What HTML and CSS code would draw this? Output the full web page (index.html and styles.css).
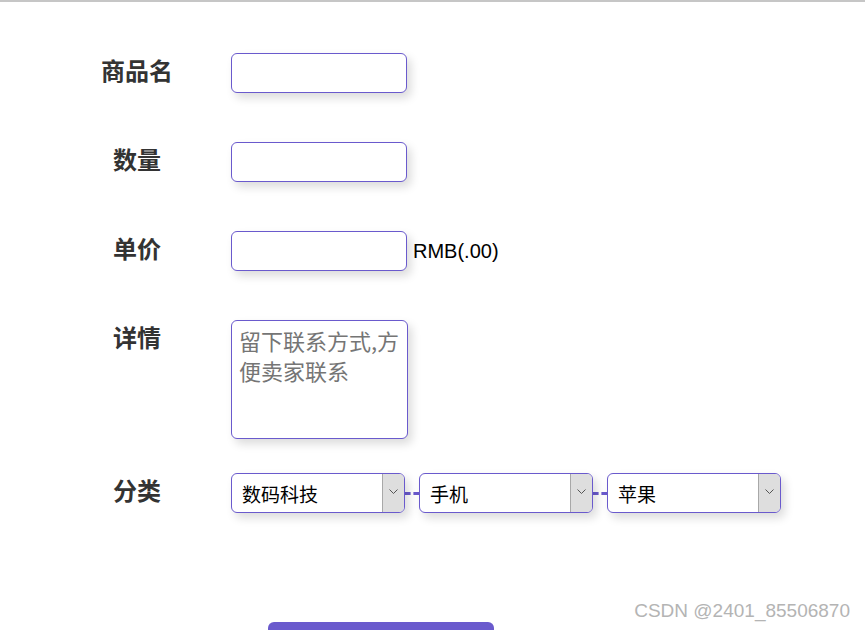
FILE: index.html
```html
<!DOCTYPE html>
<html lang="zh-CN">
<head>
    <meta charset="UTF-8">
    <meta name="viewport" content="width=device-width, initial-scale=1.0">
    <title>发布商品</title>
    <link rel="stylesheet" href="styles.css">
</head>
<body>
    <div class="top-bar"></div>

    <form class="goods-form">
        <div class="form-row">
            <label class="form-label">商品名</label>
            <div class="form-field">
                <input class="text-input" type="text">
            </div>
        </div>

        <div class="form-row">
            <label class="form-label">数量</label>
            <div class="form-field">
                <input class="text-input" type="text">
            </div>
        </div>

        <div class="form-row">
            <label class="form-label">单价</label>
            <div class="form-field">
                <input class="text-input" type="text">
                <span class="unit">RMB(.00)</span>
            </div>
        </div>

        <div class="form-row row-detail">
            <label class="form-label">详情</label>
            <div class="form-field">
                <textarea class="text-area" placeholder="留下联系方式,方便卖家联系"></textarea>
            </div>
        </div>

        <div class="form-row">
            <label class="form-label">分类</label>
            <div class="form-field">
                <div class="select-box">
                    <select><option>数码科技</option></select>
                    <span class="select-arrow">
                        <svg width="9" height="5" viewBox="0 0 9 5"><polyline points="0.5,0.5 4.5,4.5 8.5,0.5" fill="none" stroke="#555" stroke-width="1"/></svg>
                    </span>
                </div>
                <span class="select-link"></span>
                <div class="select-box">
                    <select><option>手机</option></select>
                    <span class="select-arrow">
                        <svg width="9" height="5" viewBox="0 0 9 5"><polyline points="0.5,0.5 4.5,4.5 8.5,0.5" fill="none" stroke="#555" stroke-width="1"/></svg>
                    </span>
                </div>
                <span class="select-link"></span>
                <div class="select-box">
                    <select><option>苹果</option></select>
                    <span class="select-arrow">
                        <svg width="9" height="5" viewBox="0 0 9 5"><polyline points="0.5,0.5 4.5,4.5 8.5,0.5" fill="none" stroke="#555" stroke-width="1"/></svg>
                    </span>
                </div>
            </div>
        </div>

        <div class="form-actions">
            
            <button class="submit-button" type="button" aria-label="发布"></button>
        </div>
    </form>

    <div class="watermark">CSDN @2401_85506870</div>
</body>
</html>
```

FILE: styles.css
```css
* {
    margin: 0;
    padding: 0;
    box-sizing: border-box;
}

body {
    background: #fff;
    font-family: "Noto Sans CJK SC", "Liberation Sans", sans-serif;
    overflow: hidden;
}

.top-bar {
    height: 2px;
    background: #c6c6c6;
}

.goods-form {
    padding: 51px 0 0 87px;
}

.form-row {
    display: grid;
    grid-template-columns: 100px 1fr;
    column-gap: 44px;
    align-items: start;
    margin-bottom: 49px;
}

.row-detail {
    margin-bottom: 34px;
}

.form-label {
    font-size: 24px;
    font-weight: bold;
    line-height: 34px;
    color: #333;
    text-align: center;
}

.form-field {
    display: flex;
    align-items: center;
}

.text-input {
    width: 176px;
    height: 40px;
    border: 1px solid #6a5acd;
    border-radius: 6px;
    box-shadow: 4px 5px 10px rgba(0, 0, 0, 0.14);
    outline: none;
    padding: 0 8px;
    font-size: 18px;
}

.unit {
    margin-left: 6px;
    font-family: "Liberation Sans", Arial, sans-serif;
    font-size: 20px;
    color: #000;
}

.text-area {
    width: 177px;
    height: 119px;
    border: 1px solid #6a5acd;
    border-radius: 6px;
    box-shadow: 4px 5px 10px rgba(0, 0, 0, 0.14);
    outline: none;
    resize: none;
    padding: 4px 7px 7px;
    font-family: "Noto Sans CJK SC", sans-serif;
    font-size: 22px;
    line-height: 30px;
}

.text-area::placeholder {
    color: #757575;
}

.select-box {
    position: relative;
    width: 174px;
    height: 40px;
    border: 1px solid #6a5acd;
    border-radius: 6px;
    box-shadow: 4px 5px 10px rgba(0, 0, 0, 0.14);
    overflow: hidden;
    background: #fff;
}

.select-box select {
    appearance: none;
    -webkit-appearance: none;
    width: 100%;
    height: 100%;
    border: none;
    outline: none;
    background: transparent;
    padding-left: 10px;
    font-family: "Noto Sans CJK SC", sans-serif;
    font-size: 19px;
    color: #000;
}

.select-arrow {
    position: absolute;
    top: 0;
    right: 0;
    bottom: 0;
    width: 22px;
    background: #dedede;
    border-left: 1px solid #a8a8a8;
    display: flex;
    justify-content: center;
    align-items: center;
    padding-bottom: 3px;
    pointer-events: none;
}

.select-link {
    width: 14px;
    border-top: 3px dashed #6a5acd;
}

.form-actions {
    padding: 60px 0 0 181px;
}

.submit-button {
    width: 226px;
    height: 42px;
    border: none;
    border-radius: 6px;
    background: #6a5acd;
    cursor: pointer;
}

.watermark {
    position: absolute;
    top: 600px;
    right: 15px;
    font-family: "Liberation Sans", Arial, sans-serif;
    font-size: 19px;
    color: #b4b4b4;
}
```
